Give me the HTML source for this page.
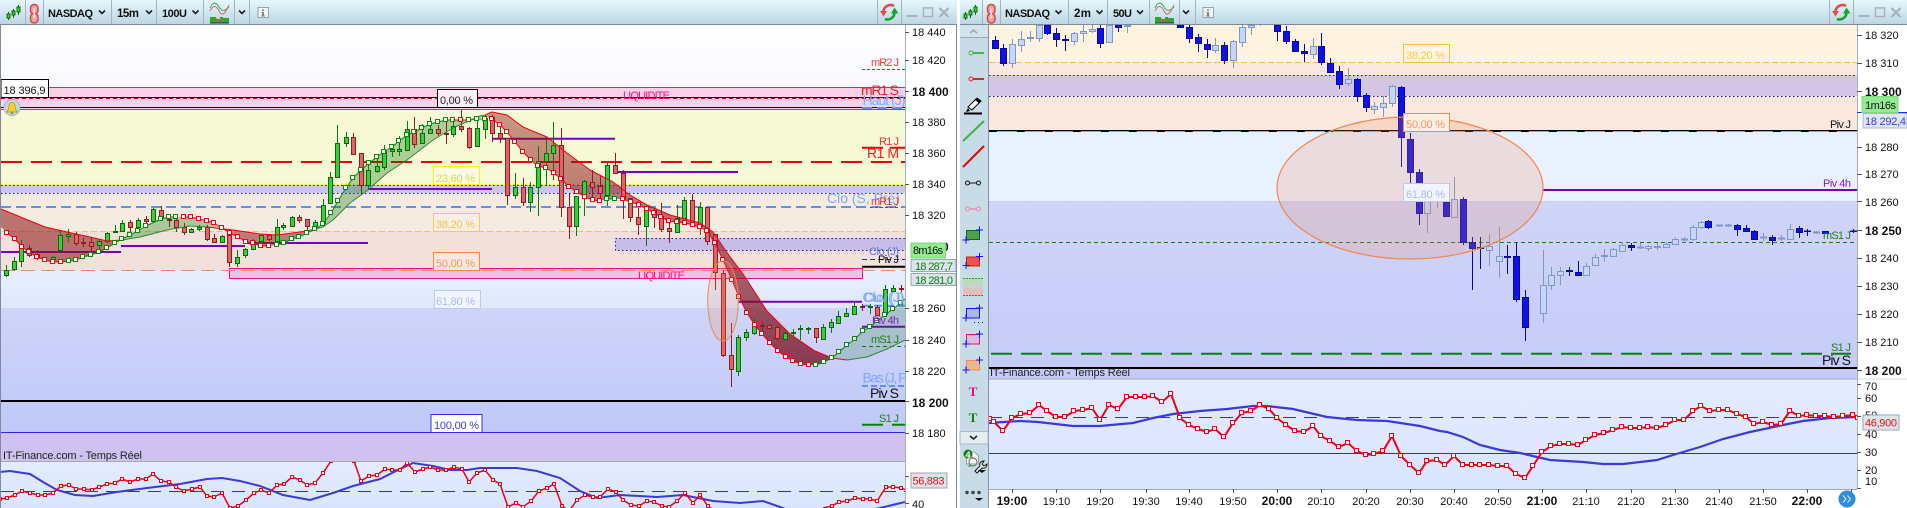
<!DOCTYPE html>
<html><head><meta charset="utf-8"><title>NASDAQ</title>
<style>html,body{margin:0;padding:0;background:#fff;overflow:hidden}svg{display:block}
text{font-family:"Liberation Sans",Arial,sans-serif;font-size:11px;fill:#111}
.b{font-weight:bold;font-size:12px}.big{font-size:14px}</style></head><body>
<svg width="1907" height="508" viewBox="0 0 1907 508" xmlns="http://www.w3.org/2000/svg">
<defs>
<linearGradient id="tb" x1="0" y1="0" x2="0" y2="1"><stop offset="0" stop-color="#e6f8fd"/><stop offset="1" stop-color="#bcd6e3"/></linearGradient>
<linearGradient id="w" x1="0" y1="0" x2="0" y2="1"><stop offset="0" stop-color="#fff"/><stop offset="1" stop-color="#f8f9ff"/></linearGradient>
<linearGradient id="lb" x1="0" y1="0" x2="0" y2="1"><stop offset="0" stop-color="#cfd5f8"/><stop offset="1" stop-color="#c0c8f8"/></linearGradient>
<linearGradient id="lb2" x1="0" y1="0" x2="0" y2="1"><stop offset="0" stop-color="#e9efff"/><stop offset="1" stop-color="#dfe7ff"/></linearGradient>
<linearGradient id="rb" x1="0" y1="0" x2="0" y2="1"><stop offset="0" stop-color="#d0d4f8"/><stop offset="1" stop-color="#c5ccf8"/></linearGradient>
<linearGradient id="ind" x1="0" y1="0" x2="0" y2="1"><stop offset="0" stop-color="#e4ebff"/><stop offset="1" stop-color="#d9e5ff"/></linearGradient>
<linearGradient id="cl" gradientUnits="userSpaceOnUse" x1="0" y1="110" x2="0" y2="365"><stop offset="0" stop-color="#8c1414" stop-opacity=".42"/><stop offset="1" stop-color="#7a1020" stop-opacity=".78"/></linearGradient>
<marker id="mr" markerWidth="6" markerHeight="6" refX="3" refY="3" markerUnits="userSpaceOnUse"><rect x=".5" y=".5" width="4" height="4" fill="#fff" stroke="#f00010"/></marker>
<marker id="mg" markerWidth="6" markerHeight="6" refX="3" refY="3" markerUnits="userSpaceOnUse"><rect x=".5" y=".5" width="4" height="4" fill="#fff" stroke="#0a8a0a"/></marker>
<marker id="mi" markerWidth="6" markerHeight="6" refX="3" refY="3" markerUnits="userSpaceOnUse"><rect x=".5" y=".5" width="4" height="4" fill="#fff" stroke="#f00010"/></marker>
<marker id="ms" markerWidth="5" markerHeight="5" refX="2" refY="2" markerUnits="userSpaceOnUse"><rect x=".5" y=".5" width="3" height="3" fill="#fff" stroke="#f00010"/></marker>
<g id="cnd"><path d="M3.5 7V15M8.5 4V13M13.5 0V10" stroke="#0a6a0a" fill="none"/><path d="M2 9h3v4H2zM7 6h3v4H7zM12 2h3v5h-3z" fill="#3ccc3c" stroke="#0a6a0a"/></g>
<g id="chn"><rect x="1" y="1" width="7.5" height="9.5" rx="3.5" fill="#f4a0a0" stroke="#d04848" stroke-width="1.5"/><rect x="1" y="10" width="7.5" height="9.5" rx="3.5" fill="#f4a0a0" stroke="#d04848" stroke-width="1.5"/><path d="M4.7 5V15" stroke="#f8d8d8" stroke-width="2"/></g>
<path id="chv" d="M0 0l3 3 3-3" fill="none" stroke="#222" stroke-width="1.6"/>
<g id="idc"><path d="M0 6C3 -1 6 0 9 5S15 9 19 5" fill="none" stroke="#30b050" stroke-width="1"/><path d="M0 9C3 3 6 3 9 9S15 12 19 3" fill="none" stroke="#e06060" stroke-width="1"/><path d="M0 15h4v-4h0v4h2v2h4v-2h3v1h6v5H0z" fill="#22b022"/><path d="M0 21h19" stroke="#2020c0"/><rect x="5" y="16.5" width="3" height="3" fill="#e05050"/><rect x="11" y="17" width="3" height="2.5" fill="#e05050"/></g>
<g id="inf"><rect x=".5" y=".5" width="10.5" height="10" fill="#eef3f6" stroke="#98a4ac"/><path d="M4.5 2.500h2v1.500h-2zM4 5h2.500v3.500h1V9.500h-4V8.500h1V6H4z" fill="#7c8890"/></g>
<g id="rf"><path d="M5 -6.5A7 7 0 0 0 -5.5 0" fill="none" stroke="#e84848" stroke-width="2.6"/><path d="M-9 -1.500h7L-5.500 4z" fill="#e84848"/><path d="M-4 6.500A7 7 0 0 0 5.500 0" fill="none" stroke="#14a82a" stroke-width="2.6"/><path d="M2 1h7.500L5.500 -5z" fill="#14a82a"/></g>
<g id="win" stroke="#a3b1ba" fill="none"><path d="M0 16h10" stroke-width="2"/><rect x="16.5" y="8" width="9" height="8.5" stroke-width="1.4"/><path d="M32.500 8l9 9M41.500 8l-9 9" stroke-width="2"/></g>
<path id="dn" d="M0 0h8l-4 3z" fill="#111"/>
<path id="pl" d="M-3.500 0h7M0 -3.500v7" stroke="#1010ff" fill="none"/>
</defs>

<!-- LEFT BANDS -->
<rect width="1907" height="508" fill="#fff"/>
<rect x="1" y="24" width="904" height="63" fill="url(#w)"/>
<rect x="1" y="87" width="904" height="22" fill="#f8d0e8"/>
<rect x="1" y="109" width="904" height="76" fill="#f6f8d6"/>
<rect x="1" y="185" width="904" height="8" fill="#cbc5e6"/>
<rect x="1" y="193" width="904" height="38" fill="#f4ece0"/>
<rect x="1" y="231" width="904" height="39" fill="#f2e0dc"/>
<rect x="1" y="270" width="904" height="38" fill="url(#lb2)"/>
<rect x="1" y="308" width="904" height="124" fill="url(#lb)"/>
<rect x="1" y="432" width="904" height="29" fill="#cfc2f0"/>
<rect x="1" y="461" width="904" height="47" fill="url(#ind)"/>

<rect x="615.5" y="238.5" width="290" height="12" fill="#c8bce8" stroke="#1818c0" stroke-dasharray="1.5 2.5"/>
<rect x="229.5" y="268.5" width="633" height="10" fill="#e8c4e6" stroke="#f0107a"/>
<path d="M1 87.5H905" stroke="#e0207a"/>
<path d="M1 109.5H905" stroke="#e0207a"/>
<path d="M1 98.5H905" stroke="#e80000" stroke-dasharray="4 3"/>
<path d="M1 97.5H905M1 107.5H905" stroke="#111"/>
<path d="M1 162H905" stroke="#f00000" stroke-width="2" stroke-dasharray="21 9"/>
<path d="M1 184.5H905" stroke="#ecec00" stroke-width="1.5" stroke-dasharray="2 2"/>
<path d="M1 185.5H905M1 193.5H905" stroke="#1818c0" stroke-dasharray="1.5 2.5"/>
<path d="M1 207H905" stroke="#5c92f8" stroke-width="2" stroke-dasharray="10 5"/>
<path d="M1 231.5H905" stroke="#f8c060" stroke-dasharray="6 3"/>
<path d="M1 270.5H905" stroke="#f09060" stroke-dasharray="14 6"/>
<path d="M1 308.5H905" stroke="#c8d4f8" stroke-dasharray="3 2"/>
<path d="M1 401H905" stroke="#000" stroke-width="2"/>
<path d="M1 432.5H905" stroke="#2a2ae0"/>

<!-- left purple lines -->
<path d="M1 252H121M121 246H245M245 243H368M368 189H492M492 138.7H615M615 172H738M738 301.7H862M862 326.7H905" stroke="#7a00b8" stroke-width="2" fill="none"/>

<!-- right-side short levels left chart -->
<path d="M862 69.5H905" stroke="#e02020" stroke-dasharray="3 2"/>
<path d="M862 108H905" stroke="#5c92f8" stroke-width="2" stroke-dasharray="10 5"/>
<path d="M862 147.7H883M890 147.7H905" stroke="#f00000" stroke-width="2"/>
<path d="M870 207.5H898" stroke="#e02020" stroke-dasharray="3 2"/>
<path d="M862 259.5H905" stroke="#2030d0" stroke-dasharray="5 3"/>
<path d="M862 266.7H905" stroke="#000" stroke-width="2"/>
<path d="M862 305.7H905" stroke="#5c92f8" stroke-width="2" stroke-dasharray="8 4"/>
<path d="M862 346.5H905" stroke="#108010" stroke-dasharray="4 3"/>
<path d="M862 386H905" stroke="#5c92f8" stroke-width="2" stroke-dasharray="6 3"/>
<path d="M862 424.7H883M892 424.7H905" stroke="#0a800a" stroke-width="2"/>

<!-- cloud fills -->
<path d="M1 209L45 227 67 232 90 237 107 241 122 240 115 243 107 248 99 252 91 255 83 257 76 260 69 261 61 262 53 262 45 260 37 257 29 252 22 247 15 239 7 233 1 227Z" fill="#8c1414" fill-opacity=".56"/>
<path d="M122 240L130 235 138 231 146 226 161 219 169 217 176 217 184 217 191 217 199 219 207 221 214 223 222 228 207 227 190 226 167 230 140 237Z" fill="#006e00" fill-opacity=".3"/>
<path d="M222 228L233 230 260 234 277 235 307 231 310 232 299 237 292 239 284 243 277 245 269 246 261 246 253 243 246 242 238 237 230 233Z" fill="#8c1414" fill-opacity=".5"/>
<path d="M310 232L315 229 323 224 331 213 338 201 346 188 353 178 361 170 369 163 377 157 384 152 392 147 399 141 407 135 414 132 422 128 430 124 438 122 446 120 453 120 461 120 469 120 477 119 485 116 480 116 453 128 433 140 407 160 387 173 368 190 350 203 333 220 323 227Z" fill="#006e00" fill-opacity=".3"/>
<path d="M485 116L492 112 507 115 523 127 547 137 567 153 590 170 613 182 630 195 647 205 670 215 700 223 713 232 728 254 743 274 767 311 790 334 815 351 832 358 824 362 816 365 809 365 801 364 793 361 786 357 778 351 770 343 762 334 755 325 747 313 739 297 732 280 723 260 715 243 707 231 700 227 693 225 685 223 677 222 669 221 661 217 654 213 647 209 639 205 631 202 623 199 615 199 607 199 600 201 593 200 585 197 577 192 569 187 561 179 554 173 546 168 538 166 531 160 523 152 515 142 507 132 500 125 492 119Z" fill="url(#cl)"/>
<path d="M832 358L839 352 847 345 855 339 863 331 870 327 877 321 885 315 893 309 901 303 905 299V340L887 349 867 357 847 360Z" fill="#0a6e0a" fill-opacity=".18"/>

<!-- LEFT CANDLES -->
<path fill="none" stroke="#0a7a0a" d="M6.5 265V277M14.5 257V271M21.5 240V267M53.5 256V260M60.5 230V251M68.5 229V242M99.5 240V252M107.5 232V243M115.5 225V233M122.5 220V232M138.5 218V231M153.5 208V222M191.5 228V233M199.5 225V231M222.5 235V243M237.5 250V267M245.5 248V258M253.5 239V250M261.5 234V243M277.5 219V243M283.5 223V230M292.5 216V227M315.5 220V228M323.5 199V224M330.5 172V204M337.5 125V178M346.5 132V147M368.5 163V188M377.5 157V173M384.5 145V170M392.5 145V157M399.5 136V156M407.5 121V151M422.5 124V144M430.5 117V134M453.5 117V137M477.5 120V147M485.5 115V139M515.5 173V199M530.5 182V212M538.5 146V216M546.5 139V186M553.5 122V180M576.5 196V236M584.5 180V216M607.5 163V206M646.5 210V246M677.5 205V233M684.5 197V219M700.5 202V235M738.5 335V376M746.5 329V341M754.5 318V335M785.5 331V340M793.5 329V337M800.5 325V340M808.5 327V334M823.5 324V340M831.5 319V333M838.5 311V324M846.5 308V317M854.5 301V315M870.5 304V314M885.5 285V317M893.5 285V292"/>
<path fill="none" stroke="#8a2020" d="M29.5 245V257M37.5 250V260M76.5 232V246M83.5 238V247M91.5 238V251M130.5 220V232M146.5 216V223M161.5 206V221M169.5 217V227M176.5 216V232M184.5 223V235M207.5 225V241M214.5 234V243M229.5 233V267M269.5 234V241M299.5 215V223M307.5 219V231M353.5 133V154M361.5 153V193M414.5 117V148M438.5 125V136M446.5 122V144M461.5 110V132M469.5 127V149M492.5 115V142M500.5 123V143M507.5 138V205M523.5 178V206M561.5 128V217M569.5 194V239M592.5 170V199M600.5 176V202M615.5 153V174M623.5 170V219M630.5 198V222M638.5 208V235M654.5 208V228M661.5 203V232M669.5 220V243M692.5 194V227M707.5 207V245M715.5 234V290M723.5 270V357M731.5 323V387M762.5 322V334M769.5 324V329M777.5 326V340M816.5 328V343M862.5 304V311M877.5 305V316M901.5 285V292"/>
<path fill="#3ccc3c" stroke="#0a6a0a" d="M4.5 270.5h4v5h-4zM12.5 261.5h4v8h-4zM19.5 246.5h4v15h-4zM51.5 257.5h4v2h-4zM58.5 235.5h4v15h-4zM66.5 234.5h4v2h-4zM97.5 241.5h4v4h-4zM105.5 233.5h4v8h-4zM113.5 231.5h4v1h-4zM120.5 223.5h4v8h-4zM136.5 220.5h4v7h-4zM151.5 209.5h4v12h-4zM189.5 229.5h4v3h-4zM197.5 227.5h4v2h-4zM220.5 236.5h4v6h-4zM235.5 257.5h4v6h-4zM243.5 249.5h4v6h-4zM251.5 241.5h4v8h-4zM259.5 235.5h4v6h-4zM275.5 227.5h4v14h-4zM281.5 225.5h4v2h-4zM290.5 217.5h4v9h-4zM313.5 222.5h4v4h-4zM321.5 205.5h4v18h-4zM328.5 177.5h4v26h-4zM335.5 143.5h4v34h-4zM344.5 137.5h4v6h-4zM366.5 170.5h4v15h-4zM375.5 166.5h4v5h-4zM382.5 151.5h4v16h-4zM390.5 149.5h4v2h-4zM397.5 149.5h4v2h-4zM405.5 129.5h4v21h-4zM420.5 133.5h4v10h-4zM428.5 129.5h4v4h-4zM451.5 126.5h4v8h-4zM475.5 128.5h4v18h-4zM483.5 118.5h4v11h-4zM513.5 187.5h4v8h-4zM528.5 187.5h4v15h-4zM536.5 161.5h4v26h-4zM544.5 153.5h4v8h-4zM551.5 145.5h4v8h-4zM574.5 196.5h4v30h-4zM582.5 181.5h4v15h-4zM605.5 165.5h4v30h-4zM644.5 210.5h4v16h-4zM675.5 218.5h4v14h-4zM682.5 200.5h4v18h-4zM698.5 207.5h4v19h-4zM736.5 337.5h4v34h-4zM744.5 332.5h4v5h-4zM752.5 323.5h4v10h-4zM783.5 333.5h4v6h-4zM791.5 332.5h4v1h-4zM798.5 328.5h4v1h-4zM806.5 328.5h4v1h-4zM821.5 327.5h4v12h-4zM829.5 322.5h4v5h-4zM836.5 316.5h4v7h-4zM844.5 313.5h4v3h-4zM852.5 306.5h4v8h-4zM868.5 306.5h4v1h-4zM883.5 289.5h4v25h-4zM891.5 288.5h4v3h-4z"/>
<path fill="#e06464" stroke="#8a2020" d="M27.5 248.5h4v7h-4zM35.5 254.5h4v3h-4zM74.5 234.5h4v9h-4zM81.5 242.5h4v1h-4zM89.5 242.5h4v4h-4zM128.5 222.5h4v5h-4zM144.5 219.5h4v2h-4zM159.5 210.5h4v8h-4zM167.5 219.5h4v1h-4zM174.5 220.5h4v7h-4zM182.5 227.5h4v5h-4zM205.5 227.5h4v12h-4zM212.5 238.5h4v4h-4zM227.5 235.5h4v27h-4zM267.5 235.5h4v4h-4zM297.5 217.5h4v3h-4zM305.5 219.5h4v7h-4zM351.5 137.5h4v17h-4zM359.5 153.5h4v32h-4zM412.5 129.5h4v15h-4zM436.5 129.5h4v4h-4zM444.5 133.5h4v1h-4zM459.5 126.5h4v3h-4zM467.5 128.5h4v19h-4zM490.5 117.5h4v16h-4zM498.5 133.5h4v5h-4zM505.5 138.5h4v57h-4zM521.5 187.5h4v15h-4zM559.5 145.5h4v62h-4zM567.5 207.5h4v19h-4zM590.5 182.5h4v5h-4zM598.5 186.5h4v7h-4zM613.5 165.5h4v8h-4zM621.5 173.5h4v25h-4zM628.5 198.5h4v19h-4zM636.5 217.5h4v7h-4zM652.5 210.5h4v7h-4zM659.5 216.5h4v13h-4zM667.5 228.5h4v3h-4zM690.5 200.5h4v24h-4zM705.5 207.5h4v34h-4zM713.5 234.5h4v38h-4zM721.5 273.5h4v82h-4zM729.5 355.5h4v14h-4zM760.5 325.5h4v1h-4zM767.5 325.5h4v3h-4zM775.5 327.5h4v11h-4zM814.5 328.5h4v9h-4zM860.5 306.5h4v1h-4zM875.5 307.5h4v8h-4zM899.5 288.5h4v1h-4z"/>

<!-- cloud lines with markers -->
<g fill="none" stroke-linejoin="round">
<polyline stroke="#f00010" points="1,209 45,227 67,232 90,237 107,241 122,240"/>
<polyline stroke="#2e8a2e" points="122,240 140,237 167,230 190,226 207,227"/>
<polyline stroke="#f00010" points="207,227 233,230 260,234 277,235 307,231"/>
<polyline stroke="#2e8a2e" points="307,231 323,227 333,220 350,203 368,190 387,173 407,160 433,140 453,128 480,116 485,115"/>
<polyline stroke="#f00010" points="485,115 492,112 507,115 523,127 547,137 567,153 590,170 613,182 630,195 647,205 670,215 700,223 713,232 728,254 743,274 767,311 790,334 815,351 832,358"/>
<polyline stroke="#f00010" points="832,358 847,360"/>
<polyline stroke="#2e8a2e" points="847,360 867,357 887,349 905,340"/>
<polyline stroke="#f00010" marker-start="url(#mr)" marker-mid="url(#mr)" marker-end="url(#mr)" points="7,233 15,239 22,247 29,252 37,257 45,260 53,262 61,262 69,261"/>
<polyline stroke="#0a8a0a" marker-start="url(#mg)" marker-mid="url(#mg)" marker-end="url(#mg)" points="69,261 76,260 83,257 91,255 99,252 107,248 115,243 122,239 130,235 138,231 146,226 161,219 169,217 176,217"/>
<polyline stroke="#f00010" marker-start="url(#mr)" marker-mid="url(#mr)" marker-end="url(#mr)" points="184,217 191,217 199,219 207,221 214,223 222,228 230,233 238,237 246,242 253,243 261,246 269,246"/>
<polyline stroke="#0a8a0a" marker-start="url(#mg)" marker-mid="url(#mg)" marker-end="url(#mg)" points="277,245 284,243 292,239 299,237 307,233 315,229 323,224 331,213 338,201 346,188 353,178 361,170 369,163 377,157 384,152 392,147 399,141 407,135 414,132 422,128 430,124 438,122 446,120 453,120"/>
<polyline stroke="#f00010" marker-mid="url(#mr)" points="453,120 461,120 469,120"/>
<polyline stroke="#0a8a0a" marker-start="url(#mg)" marker-mid="url(#mg)" marker-end="url(#mg)" points="469,120 477,119 485,119"/>
<polyline stroke="#f00010" marker-start="url(#mr)" marker-mid="url(#mr)" marker-end="url(#mr)" points="492,119 500,125 507,132 515,142 523,152 531,160 538,166 546,168 554,173 561,179 569,187 577,192 585,197 593,200 600,201"/>
<polyline stroke="#0a8a0a" marker-start="url(#mg)" marker-end="url(#mg)" points="607,199 615,199"/>
<polyline stroke="#f00010" marker-start="url(#mr)" marker-mid="url(#mr)" marker-end="url(#mr)" points="623,199 631,202 639,205 647,209 654,213 661,217 669,221 677,222 685,223 693,225 700,227 707,231 715,243 723,260 732,280 739,297 747,313 755,325 762,334 770,343 778,351 786,357 793,361 801,364 809,365"/>
<polyline stroke="#0a8a0a" marker-start="url(#mg)" marker-mid="url(#mg)" marker-end="url(#mg)" points="816,365 824,362 832,358 839,352 847,345 855,339 863,331 870,327 877,321 885,315 893,309 901,303"/>
<path d="M901 303L905 299" stroke="#0a8a0a"/>
</g>

<ellipse cx="723" cy="301" rx="15.3" ry="40" fill="#f08c5a" fill-opacity=".2" stroke="#f08850"/>

<!-- left labels -->
<rect x="437.5" y="89.5" width="40" height="18" fill="#fbeef6" stroke="#000"/>
<rect x="433.5" y="166.5" width="46" height="18" fill="#fbfbe6" stroke="#f8f800"/>
<rect x="433.5" y="213.5" width="46" height="18" fill="#f7eee2" stroke="#fbc468"/>
<rect x="433.5" y="252.5" width="46" height="18" fill="#f7e7e0" stroke="#f08a50"/>
<rect x="434.5" y="290.5" width="46" height="18" fill="#f0f4ff" stroke="#b8c8f8"/>
<rect x="431" y="414.5" width="51" height="18" fill="#fff" stroke="#3030d8"/>
<rect x="1" y="79.5" width="47.5" height="18" fill="#fff" stroke="#000"/>
<text x="3.5" y="94" font-size="11.5" textLength="42">18 396,9</text>
<text x="440" y="104" textLength="33" style="fill:#222">0,00 %</text>
<text x="436" y="182" textLength="39" style="fill:#dcdc40">23,60 %</text>
<text x="436" y="228" textLength="39" style="fill:#f8c060">38,20 %</text>
<text x="436" y="267" textLength="39" style="fill:#f49858">50,00 %</text>
<text x="436" y="305" textLength="39" style="fill:#a8bce8">61,80 %</text>
<text x="434" y="429" textLength="45" style="fill:#4040d0">100,00 %</text>
<text x="623" y="99" textLength="47" style="fill:#ff1080">LIQUIDITE</text>
<text x="638" y="279" textLength="47" style="fill:#ff1080">LIQUIDITE</text>
<text x="861" y="95" class="big" textLength="38" style="fill:#f02020">mR1 S</text>
<svg x="860" y="90" width="45" height="24"><text x="2.5" y="15" class="big" textLength="43" style="fill:#7fa8f8">Haut (J)</text></svg>
<text x="871" y="66" textLength="28" style="fill:#f03838">mR2 J</text>
<text x="879" y="145" textLength="20" style="fill:#f03030">R1 J</text>
<text x="867" y="158" class="big" textLength="32" style="fill:#f02020">R1 M</text>
<text x="827" y="203" class="big" textLength="73" style="fill:#7fa8f8">Clo (S, Pré)</text>
<text x="871" y="205" textLength="28" style="fill:#f03030">mR1 J</text>
<text x="869" y="255" textLength="30" style="fill:#5a78e8">Clo (J)</text>
<text x="878" y="263" textLength="21" style="fill:#111">Piv J</text>
<svg x="860" y="285" width="45" height="24"><text x="2.5" y="17" class="big" textLength="42" style="fill:#7fa8f8">Clo (J)</text><text x="4" y="17" class="big" textLength="40" style="fill:#7fa8f8">Ouv (J)</text></svg>
<text x="872" y="324" textLength="27" style="fill:#8020c0">Piv 4h</text>
<text x="871" y="343" textLength="28" style="fill:#208020">mS1 J</text>
<svg x="860" y="365" width="45" height="22"><text x="2.5" y="17.5" class="big" textLength="45" style="fill:#7fa8f8">Bas (J, P</text></svg>
<text x="870" y="398" class="big" textLength="29" style="fill:#111">Piv S</text>
<text x="879" y="422" textLength="20" style="fill:#208020">S1 J</text>
<text x="3" y="459" font-size="12" textLength="139" style="fill:#222">IT-Finance.com - Temps Réel</text>

<!-- left indicator -->
<svg x="1" y="461" width="904" height="47" viewBox="1 461 904 47">
<path d="M1 491.5H905" stroke="#3030c8" stroke-dasharray="13 8"/>
<polyline fill="none" stroke="#3a3ad8" stroke-width="2" points="0,472 10,471 30,474 43,482 57,490 75,495 93,496 117,492 147,488 180,484 207,479 222,478 240,481 260,486 283,495 310,500 333,493 353,486 380,479 400,469 413,463 433,466 450,470 467,470 480,468 517,468 537,471 560,478 580,491 597,498 620,495 657,497 683,495 713,501 740,503 763,501 780,507 793,512"/>
<polyline fill="none" stroke="#f00010" stroke-width="1.5" marker-start="url(#ms)" marker-mid="url(#ms)" marker-end="url(#ms)" points="0,499 7,498 15,495 22,491 30,493 38,495 45,495 53,493 61,486 69,485 76,489 84,489 92,490 99,487 107,484 115,483 122,479 130,482 138,479 146,479 153,474 161,481 169,482 176,487 184,491 192,489 200,487 207,496 214,497 222,493 230,508 238,506 246,500 254,493 261,490 269,493 277,485 284,484 292,477 300,480 307,485 315,483 323,473 331,461"/>
<polyline fill="none" stroke="#f00010" stroke-width="1.5" marker-start="url(#ms)" marker-mid="url(#ms)" marker-end="url(#ms)" points="354,461 361,481 369,476 377,475 385,469 392,470 400,470 407,463 415,472 423,469 430,467 438,470 446,470 454,467 462,469 469,482 477,473 485,470 493,480 500,484 508,507 516,503 523,507 531,501 539,491 547,488 554,484 562,506 569,511 577,500 585,495 593,497 600,497 608,489 616,492 623,500 631,505 639,506 647,501 654,502 662,506 669,507 677,501 685,493 693,503 700,495 708,506 716,512"/>
<polyline fill="none" stroke="#f00010" stroke-width="1.5" marker-mid="url(#ms)" points="823,508 832,506 839,502 847,501 855,498 863,499 870,499 877,501 886,487 893,487 901,488 906,490"/>
<polyline fill="none" stroke="#3a3ad8" stroke-width="2" points="860,512 880,508 905,502"/>
</svg>
<path d="M1 461.5H905" stroke="#a4aab2"/>
<path d="M0.5 24V508" stroke="#7c8c9c"/>

<!-- left axis -->
<rect x="905" y="24" width="52" height="484" fill="#fff"/>
<path d="M905.5 24V508" stroke="#a4b0ba"/>
<path d="M905 32.5h4M905 60.5h4M905 91.5h4M905 122.5h4M905 153.5h4M905 184.5h4M905 215.5h4M905 308.5h4M905 340.5h4M905 371.5h4M905 401.5h4M905 433.5h4M905 476.5h4M905 503.5h4" stroke="#555"/>
<text x="912" y="36">18 440</text><text x="912" y="64">18 420</text><text x="912" y="96" class="b">18 400</text><text x="912" y="126">18 380</text><text x="912" y="157">18 360</text><text x="912" y="188">18 340</text><text x="912" y="219">18 320</text><text x="912" y="251" class="b">18 300</text><text x="912" y="312">18 260</text><text x="912" y="344">18 240</text><text x="912" y="375">18 220</text><text x="912" y="407" class="b">18 200</text><text x="912" y="437">18 180</text><text x="912" y="508">40</text>
<rect x="911" y="243" width="34.5" height="15" fill="#90ee90" stroke="#80d080"/>
<text x="913" y="254" textLength="30">8m16s</text>
<rect x="911" y="259.5" width="45" height="12" fill="#dae4ea" stroke="#98a8b4"/>
<text x="915" y="270" textLength="38" style="fill:#108010">18 287,7</text>
<rect x="911" y="273.5" width="45" height="12" fill="#dae4ea" stroke="#98a8b4"/>
<text x="915" y="284" textLength="38" style="fill:#108010">18 281,0</text>
<rect x="911" y="473" width="36" height="15" fill="#dce4ec" stroke="#98a8b4"/>
<text x="912.5" y="484.5" textLength="32" style="fill:#f01010">56,883</text>
<path d="M956.5 24V508" stroke="#7c8c9c"/>

<!-- RIGHT BANDS -->
<rect x="989" y="25" width="868" height="37" fill="#fef3df"/>
<rect x="989" y="62" width="868" height="13" fill="#fbe8e0"/>
<rect x="989" y="75" width="868" height="21" fill="#d3c5e4"/>
<rect x="989" y="96" width="868" height="35" fill="#fbe9e0"/>
<rect x="989" y="131" width="868" height="70" fill="#e9f0ff"/>
<rect x="989" y="201" width="868" height="167" fill="url(#rb)"/>
<rect x="989" y="368" width="868" height="11" fill="#c6ccf8"/>
<rect x="989" y="379" width="868" height="110" fill="url(#ind)"/>
<rect x="989" y="489" width="868" height="19" fill="#fff"/>
<text x="990" y="376" font-size="12" textLength="140" style="fill:#222">IT-Finance.com - Temps Réel</text>

<path d="M989 62.5H1857" stroke="#fcbc40" stroke-dasharray="6 3"/>
<path d="M989 75.5H1857M989 96.5H1857" stroke="#1818c0" stroke-dasharray="1.5 2.5"/>
<path d="M989 131.5H1857" stroke="#f09060"/>
<path d="M989 130.5H1857" stroke="#000"/>
<path d="M989 131.5H1857" stroke="#000" stroke-dasharray="8 20"/>
<path d="M989 201.5H1857" stroke="#c4ccf0" stroke-dasharray="3 2"/>
<path d="M989 242.5H1857" stroke="#108010" stroke-dasharray="4 3"/>
<path d="M1543 190H1857" stroke="#7a00b8" stroke-width="2"/>
<path d="M991 353.7H1851" stroke="#0a800a" stroke-width="2" stroke-dasharray="21 9"/>
<path d="M989 368H1857" stroke="#000" stroke-width="2"/>

<!-- RIGHT CANDLES -->
<path fill="none" stroke="#0a0a9a" d="M995.5 36V49M1003.5 44V66M1047.5 25V35M1056.5 28V47M1065.5 35V51M1100.5 25V48M1118.5 25V32M1180.5 25V28M1189.5 25V43M1198.5 34V52M1207.5 39V58M1224.5 42V64M1277.5 25V41M1286.5 26V44M1295.5 39V52M1304.5 44V62M1321.5 33V65M1330.5 58V72M1339.5 66V89M1357.5 78V102M1366.5 93V112M1401.5 86V167M1410.5 133V183M1419.5 169V225M1446.5 195V216M1463.5 197V245M1472.5 237V290M1480.5 237V269M1507.5 245V274M1516.5 243V302M1525.5 290V341M1569.5 267V276M1578.5 261V276M1631.5 243V251M1708.5 220V229M1737.5 224V236M1746.5 225V232M1754.5 230V240M1772.5 235V245M1799.5 226V238M1807.5 229V236M1825.5 231V234M1853.5 229V233"/>
<path fill="none" stroke="#8098c8" d="M1012.5 39V68M1021.5 31V52M1030.5 31V42M1039.5 25V42M1074.5 32V45M1083.5 25V42M1092.5 25V33M1109.5 25V43M1127.5 25V33M1215.5 38V53M1233.5 40V68M1242.5 25V47M1251.5 25V35M1260.5 25V26M1313.5 38V59M1348.5 68V86M1374.5 102V114M1383.5 96V117M1392.5 85V107M1427.5 195V233M1437.5 200V208M1454.5 177V218M1489.5 234V266M1499.5 227V278M1543.5 250V323M1551.5 267V290M1560.5 267V285M1586.5 263V276M1595.5 254V266M1604.5 249V262M1613.5 248V257M1622.5 242V252M1640.5 243V249M1648.5 245V251M1657.5 243V250M1666.5 242V248M1675.5 237V245M1684.5 237V243M1693.5 225V241M1701.5 221V229M1719.5 225V227M1728.5 224V227M1763.5 233V241M1781.5 235V241M1790.5 224V240M1816.5 231V234"/>
<path fill="#1010e8" stroke="#0a0a9a" d="M992.5 40.5h6v8h-6zM1000.5 48.5h6v15h-6zM1044.5 25.5h6v8h-6zM1053.5 33.5h6v6h-6zM1062.5 39.5h6v1h-6zM1097.5 28.5h6v15h-6zM1115.5 25.5h6v2h-6zM1177.5 25.5h6v2h-6zM1186.5 27.5h6v11h-6zM1195.5 37.5h6v6h-6zM1204.5 44.5h6v5h-6zM1221.5 45.5h6v15h-6zM1274.5 25.5h6v6h-6zM1283.5 31.5h6v10h-6zM1292.5 41.5h6v10h-6zM1301.5 51.5h6v2h-6zM1318.5 46.5h6v16h-6zM1327.5 63.5h6v9h-6zM1336.5 71.5h6v13h-6zM1354.5 79.5h6v17h-6zM1363.5 95.5h6v12h-6zM1398.5 87.5h6v50h-6zM1407.5 139.5h6v33h-6zM1416.5 172.5h6v41h-6zM1443.5 202.5h6v14h-6zM1460.5 199.5h6v43h-6zM1469.5 242.5h6v6h-6zM1477.5 247.5h6v1h-6zM1504.5 256.5h6v1h-6zM1513.5 256.5h6v43h-6zM1522.5 297.5h6v30h-6zM1566.5 270.5h6v1h-6zM1575.5 272.5h6v3h-6zM1628.5 245.5h6v2h-6zM1705.5 221.5h6v6h-6zM1734.5 225.5h6v4h-6zM1743.5 228.5h6v3h-6zM1751.5 231.5h6v8h-6zM1769.5 237.5h6v3h-6zM1796.5 228.5h6v4h-6zM1804.5 231h6v.5h-6zM1822.5 231.5h6v2h-6zM1850.5 231h6v.5h-6z"/>
<path fill="#c6d6f4" stroke="#8098c8" d="M1009.5 44.5h6v19h-6zM1018.5 39.5h6v6h-6zM1027.5 37.5h6v1h-6zM1036.5 25.5h6v13h-6zM1071.5 33.5h6v8h-6zM1080.5 31.5h6v2h-6zM1089.5 29.5h6v2h-6zM1106.5 25.5h6v17h-6zM1124.5 25.5h6v1h-6zM1212.5 45.5h6v5h-6zM1230.5 41.5h6v19h-6zM1239.5 27.5h6v15h-6zM1248.5 25.5h6v2h-6zM1310.5 46.5h6v8h-6zM1345.5 79.5h6v4h-6zM1371.5 106.5h6v3h-6zM1380.5 103.5h6v4h-6zM1389.5 86.5h6v17h-6zM1424.5 201.5h6v12h-6zM1451.5 199.5h6v18h-6zM1486.5 246.5h6v4h-6zM1496.5 256.5h6v5h-6zM1540.5 285.5h6v28h-6zM1548.5 275.5h6v10h-6zM1557.5 271.5h6v4h-6zM1583.5 266.5h6v9h-6zM1592.5 257.5h6v8h-6zM1601.5 255.5h6v1h-6zM1610.5 249.5h6v7h-6zM1619.5 245.5h6v6h-6zM1637.5 247h6v1h-6zM1645.5 246.5h6v2h-6zM1654.5 246.5h6v1h-6zM1663.5 244.5h6v3h-6zM1672.5 239.5h6v5h-6zM1681.5 239h6v1h-6zM1690.5 227.5h6v12h-6zM1698.5 222.5h6v5h-6zM1716.5 225h6v1h-6zM1725.5 225h6v1h-6zM1760.5 237h6v1h-6zM1778.5 238h6v1h-6zM1787.5 229.5h6v10h-6zM1813.5 232h6v1h-6z"/>
<ellipse cx="1410" cy="188" rx="133" ry="71" fill="#f08c5a" fill-opacity=".2" stroke="#f08850" stroke-width="1.2"/>

<!-- right labels -->
<rect x="1403.5" y="44.5" width="46" height="18" fill="#fef5e2" stroke="#fcc040"/>
<rect x="1403.5" y="113.5" width="46" height="18" fill="#fcefe8" stroke="#f58a50"/>
<rect x="1403.5" y="183.5" width="46" height="18" fill="#f2f5ff" stroke="#bcc8f0"/>
<text x="1406" y="59" textLength="39" style="fill:#fcc84c">38,20 %</text>
<text x="1406" y="128" textLength="39" style="fill:#f59858">50,00 %</text>
<text x="1406" y="198" textLength="39" style="fill:#a8bce8">61,80 %</text>
<text x="1830" y="128" textLength="21" style="fill:#111">Piv J</text>
<text x="1823" y="187" textLength="28" style="fill:#8020c0">Piv 4h</text>
<text x="1823" y="239" textLength="28" style="fill:#208020">mS1 J</text>
<text x="1831" y="351" textLength="20" style="fill:#208020">S1 J</text>
<text x="1822" y="365" class="big" textLength="29" style="fill:#111">Piv S</text>

<!-- right indicator -->
<svg x="989" y="379" width="868" height="110" viewBox="989 379 868 110">
<path d="M989 417.5H1857" stroke="#3030c8" stroke-dasharray="13 8"/>
<path d="M989 453.5H1857" stroke="#2a2ad0"/>
<polyline fill="none" stroke="#3a3ad8" stroke-width="2.2" points="989,423 1003,422 1020,421 1038,422 1073,426 1100,426 1133,423 1153,418 1173,414 1200,411 1227,409 1253,406 1267,406 1293,409 1327,417 1357,420 1387,421 1420,426 1440,431 1447,432 1463,437 1480,445 1500,450 1520,453 1550,460 1583,462 1603,464 1623,464 1657,460 1673,455 1700,447 1723,439 1750,432 1783,425 1803,421 1830,418 1857,417"/>
<polyline fill="none" stroke="#f00010" stroke-width="2" marker-start="url(#mi)" marker-mid="url(#mi)" marker-end="url(#mi)" points="990,419 994,422 1003,431 1012,418 1021,414 1030,413 1039,405 1047,411 1056,417 1065,417 1074,411 1083,410 1092,408 1100,420 1109,405 1118,409 1127,397 1136,397 1145,397 1153,396 1162,402 1171,394 1180,418 1189,425 1198,429 1207,432 1215,429 1224,437 1233,423 1242,413 1251,411 1260,405 1269,409 1277,418 1286,425 1295,431 1304,432 1313,426 1321,436 1330,441 1339,447 1348,443 1357,451 1366,455 1374,454 1383,451 1392,436 1401,456 1410,465 1419,473 1427,461 1437,460 1445,465 1454,456 1463,465 1472,465 1480,465 1489,465 1498,466 1507,466 1516,474 1525,478 1533,466 1542,452 1551,446 1560,444 1569,444 1578,445 1586,440 1595,435 1604,433 1613,430 1622,427 1631,428 1640,428 1648,427 1657,428 1666,425 1675,420 1684,420 1693,411 1701,406 1710,411 1719,410 1728,410 1737,414 1746,417 1754,424 1763,422 1772,425 1781,424 1790,411 1799,416 1807,415 1816,416 1825,416 1834,417 1843,416 1853,415 1858,418"/>
</svg>
<path d="M989 379H1857" stroke="#a4aab2"/>
<path d="M989 489.5H1857" stroke="#a4aab2"/>
<path d="M1012.5 489v4M1056.5 489v4M1100.5 489v4M1146.5 489v4M1189.5 489v4M1233.5 489v4M1277.5 489v4M1321.5 489v4M1366.5 489v4M1410.5 489v4M1454.5 489v4M1498.5 489v4M1542.5 489v4M1586.5 489v4M1631.5 489v4M1675.5 489v4M1719.5 489v4M1763.5 489v4M1807.5 489v4M1851.5 489v4" stroke="#555"/>
<g text-anchor="middle">
<text x="1012" y="505" class="b">19:00</text><text x="1056.5" y="505">19:10</text><text x="1100" y="505">19:20</text><text x="1146" y="505">19:30</text><text x="1189" y="505">19:40</text><text x="1233" y="505">19:50</text><text x="1277" y="505" class="b">20:00</text><text x="1321" y="505">20:10</text><text x="1366" y="505">20:20</text><text x="1410" y="505">20:30</text><text x="1454" y="505">20:40</text><text x="1498" y="505">20:50</text><text x="1542" y="505" class="b">21:00</text><text x="1586" y="505">21:10</text><text x="1631" y="505">21:20</text><text x="1675" y="505">21:30</text><text x="1719" y="505">21:40</text><text x="1763" y="505">21:50</text><text x="1807" y="505" class="b">22:00</text>
</g>
<circle cx="1847" cy="499" r="8.5" fill="#2b8ce2"/>
<path d="M1843 495.5l3 3.500-3 3.500M1847.5 495.5l3 3.500-3 3.500" fill="none" stroke="#dff0ff"/>

<!-- right axis -->
<rect x="1858" y="24" width="49" height="484" fill="#fff"/>
<path d="M1857.5 24V489" stroke="#a4b0ba"/>
<path d="M1858 379H1907" stroke="#d4d8dc"/>
<path d="M1857 35.5h5M1857 63.5h5M1857 91.5h5M1857 147.5h5M1857 174.5h5M1857 201.5h5M1857 230.5h5M1857 258.5h5M1857 286.5h5M1857 314.5h5M1857 342.5h5M1857 370.5h5M1857 384.5h4M1857 398.5h4M1857 416.5h4M1857 434.5h4M1857 452.5h4M1857 470.5h4M1857 488.5h4" stroke="#555"/>
<text x="1865" y="39">18 320</text><text x="1865" y="67">18 310</text><text x="1865" y="96" class="b">18 300</text><text x="1865" y="151">18 280</text><text x="1865" y="178">18 270</text><text x="1865" y="206">18 260</text><text x="1865" y="235" class="b">18 250</text><text x="1865" y="262">18 240</text><text x="1865" y="290">18 230</text><text x="1865" y="318">18 220</text><text x="1865" y="346">18 210</text><text x="1865" y="375" class="b">18 200</text>
<text x="1865" y="390">70</text><text x="1865" y="402">60</text><text x="1865" y="419">50</text><text x="1865" y="438">40</text><text x="1865" y="456">30</text><text x="1865" y="474">20</text><text x="1865" y="485">10</text>
<path d="M1857 112.5H1907" stroke="#2a2ae0"/>
<rect x="1862" y="96.5" width="36" height="16" fill="#90ee90" stroke="#80d880"/>
<text x="1865" y="109" textLength="31">1m16s</text>
<rect x="1863" y="113.5" width="44" height="14.500" fill="#dfe6f6" stroke="#a8b8c8"/>
<text x="1865" y="125" textLength="41" style="fill:#3838e8">18 292,4</text>
<rect x="1863" y="415" width="36" height="15" fill="#dce4ec" stroke="#98a8b4"/>
<text x="1865" y="426.5" textLength="32" style="fill:#f01010">46,900</text>

<!-- SIDEBAR -->
<rect x="960" y="24" width="28.5" height="484" fill="#c8dce8"/>
<path d="M988.5 24V508" stroke="#8094a4"/>
<rect x="960" y="25" width="28" height="12" fill="#d4e4ec"/>
<path d="M960 37.5H988" stroke="#98aab8"/>
<path d="M970 33l3.500-3 3.500 3" fill="none" stroke="#98a8b0" stroke-width="1.5"/>
<circle cx="971" cy="53" r="2" fill="#d8ecd8" stroke="#40b040"/><path d="M973 53h11" stroke="#30b030" stroke-width="1.7"/>
<circle cx="971" cy="79" r="2" fill="#f8d8d8" stroke="#e02020"/><path d="M973 79h11" stroke="#f00000" stroke-width="1.7"/>
<path d="M968 107l9-9 4 3-9 9z" fill="#fff" stroke="#000"/><path d="M975 100l4 3 2-2-4-3z" fill="#000"/><path d="M964 113.5h18" stroke="#000" stroke-width="2"/><path d="M968 108l-2 4 4-1z" fill="#000"/>
<path d="M963 141L984 121" stroke="#40b040" stroke-width="2"/>
<path d="M963 167L984 146" stroke="#f00000" stroke-width="2"/>
<circle cx="967.5" cy="183" r="2" fill="none" stroke="#111"/><circle cx="978.5" cy="183" r="2" fill="none" stroke="#111"/><path d="M970 183h6" stroke="#111"/>
<circle cx="967.5" cy="209" r="2" fill="none" stroke="#f088b8"/><circle cx="978.5" cy="209" r="2" fill="none" stroke="#f088b8"/><path d="M970 209h6" stroke="#f088b8" stroke-width="1.5"/>
<rect x="966.5" y="230.5" width="13" height="9" fill="#4ca04c" stroke="#0a700a"/><use href="#pl" x="979.5" y="230"/><use href="#pl" x="966" y="240"/>
<rect x="966.5" y="257" width="13" height="9" fill="#f05050" stroke="#c02020"/><use href="#pl" x="979.5" y="256.5"/><use href="#pl" x="966" y="265.5"/>
<rect x="963" y="278" width="20" height="18" fill="#c8d4d4"/><path d="M963 287l5-3 4 2 5-3 6 2v-7h-20z" fill="#b8dcb8"/><path d="M963 288l5-1 5 2 4-2 6 1v8h-20z" fill="#e0c0c0"/><path d="M963 278.5h20" stroke="#20b020" stroke-dasharray="2 1"/><path d="M963 295.5h20" stroke="#e03030" stroke-dasharray="2 1"/>
<rect x="966.5" y="308.5" width="13" height="9.5" fill="#a8b8e8" stroke="#1010ff"/><use href="#pl" x="979.5" y="308"/><use href="#pl" x="966" y="318"/><path d="M974 322.5h9" stroke="#1010ff" stroke-dasharray="1 3"/>
<rect x="966.5" y="334.5" width="13" height="9.5" fill="#d0c0e0" stroke="#e8107a"/><use href="#pl" x="979.5" y="334"/><use href="#pl" x="966" y="344"/>
<rect x="966.5" y="360.5" width="13" height="9.5" fill="#e8b898" stroke="#f08850"/><use href="#pl" x="979.5" y="360"/><use href="#pl" x="966" y="370"/>
<text x="973" y="396" text-anchor="middle" style="font-family:'Liberation Serif',serif;font-weight:bold;font-size:13px;fill:#e80a80">T</text>
<text x="973" y="422" text-anchor="middle" style="font-family:'Liberation Serif',serif;font-weight:bold;font-size:13px;fill:#0a800a">T</text>
<rect x="960" y="431.5" width="28" height="12.5" fill="#e2eef4" stroke="#a8b8c4"/>
<path d="M970 436l3.500 3 3.500-3" fill="none" stroke="#222" stroke-width="1.5"/>
<path d="M966.5 452h8l4 4v8h-12z" fill="#f4f6f8" stroke="#9aa4ac"/>
<circle cx="973" cy="462" r="4" fill="none" stroke="#666"/><path d="M968 466h6" stroke="#30a030"/><path d="M970 456l5 3" stroke="#e04040"/>
<path d="M975 471l5-5c-1-3 1-5 4-5l-2 3 2 2 3-2c0 3-2 5-5 4l-5 5z" fill="#fff" stroke="#111"/>
<circle cx="968" cy="454" r="4.5" fill="#0c860c"/><text x="968" y="458" text-anchor="middle" style="font-size:9px;font-weight:bold;fill:#fff">4</text>
<use href="#dn" x="978" y="470"/>
<circle cx="967" cy="492.5" r="1.8" fill="#444"/><circle cx="973" cy="492.5" r="1.8" fill="#444"/><circle cx="979" cy="492.5" r="1.8" fill="#444"/>
<use href="#dn" x="975" y="498"/>

<!-- TOOLBARS -->
<rect x="0" y="0" width="957" height="24" fill="url(#tb)"/>
<rect x="960" y="0" width="947" height="24" fill="url(#tb)"/>
<path d="M0 24.5H957M960 24.5H1907" stroke="#7c8c9a"/>
<path d="M25.5 0v24M43.5 0v24M111.5 0v24M156.5 0v24M203.5 0v24M234.5 0v24M249.5 0v24M877.5 0v24M901.5 0v24M982.5 0v24M1000.5 0v24M1068.5 0v24M1107.5 0v24M1149.5 0v24M1179.5 0v24M1195.5 0v24M1829.5 0v24M1853.5 0v24" stroke="#a4b4c0"/>
<use href="#cnd" x="5" y="5"/><use href="#cnd" x="962" y="5"/>
<use href="#chn" x="29.5" y="3.5"/><use href="#chn" x="986.5" y="3.5"/>
<text x="48" y="17" class="b" textLength="45" style="font-size:11px;fill:#111">NASDAQ</text>
<text x="117" y="17" class="b" textLength="22" style="font-size:11.5px;fill:#111">15m</text>
<text x="162" y="17" class="b" textLength="25" style="font-size:11px;fill:#111">100U</text>
<text x="1005" y="17" class="b" textLength="45" style="font-size:11px;fill:#111">NASDAQ</text>
<text x="1074" y="17" class="b" textLength="17" style="font-size:11.5px;fill:#111">2m</text>
<text x="1113" y="17" class="b" textLength="19" style="font-size:11px;fill:#111">50U</text>
<use href="#chv" x="99" y="10.5"/><use href="#chv" x="146" y="10.5"/><use href="#chv" x="192.5" y="10.5"/><use href="#chv" x="239" y="10.5"/>
<use href="#chv" x="1055.5" y="10.5"/><use href="#chv" x="1096.5" y="10.5"/><use href="#chv" x="1137" y="10.5"/><use href="#chv" x="1183" y="10.5"/>
<use href="#idc" x="210" y="2"/><use href="#idc" x="1155" y="2"/>
<use href="#inf" x="257.5" y="7"/><use href="#inf" x="1202.5" y="7"/>
<use href="#rf" x="889" y="12.5"/><use href="#rf" x="1841" y="12.5"/>
<use href="#win" x="907"/><use href="#win" x="1859"/>

<!-- bell -->
<circle cx="12" cy="107.5" r="8" fill="#c4d4e4" stroke="#a8b8c8"/>
<path d="M6.5 112c2-2 2-3 2.500-6 .4-2.500 1.500-3.500 3-3.500s2.600 1 3 3.500c.5 3 .5 4 2.500 6z" fill="#f8d020" stroke="#b89010" stroke-width=".7"/>
<circle cx="12" cy="113" r="1.3" fill="#b89010"/>
</svg>
</body></html>
